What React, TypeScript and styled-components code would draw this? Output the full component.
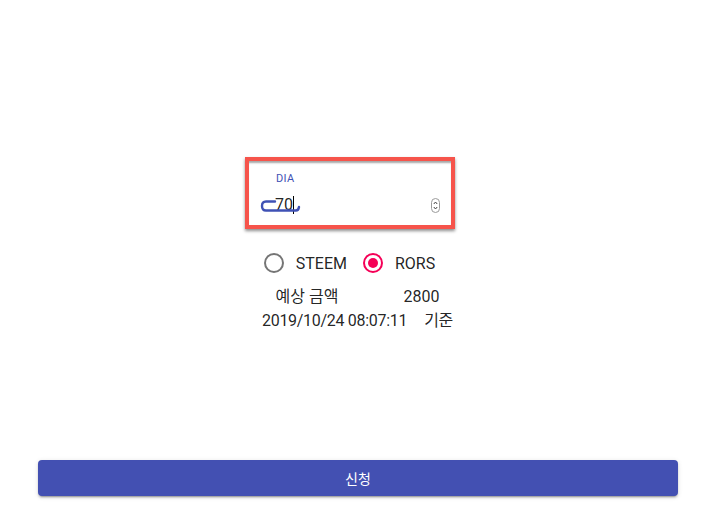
import React from "react";
import styled, { createGlobalStyle } from "styled-components";

const Global = createGlobalStyle`
  html, body { margin: 0; padding: 0; background: #fff; }
  body { font-family: Roboto, "Noto Sans CJK KR", "Liberation Sans", sans-serif; color: rgba(0,0,0,0.87); }
`;

const Page = styled.div`
  height: 519px;
  display: flex;
  flex-direction: column;
  align-items: center;
  box-sizing: border-box;
  padding-top: 157px;
`;

const FieldBox = styled.div`
  position: relative;
  width: 210px;
  height: 72px;
  box-sizing: border-box;
  border: 4px solid #f6544b;
  margin-right: 13px;
  background: #fff;
  box-shadow: 0 2px 3px rgba(0, 0, 0, 0.45), inset 0 3px 2px -1px rgba(0, 0, 0, 0.35);
  padding: 11px 0 0 27px;
`;

const Label = styled.div`
  font-size: 11px;
  line-height: 13px;
  color: #3f51b5;
  letter-spacing: 0.4px;
`;

const ValueRow = styled.div`
  margin-top: 10px;
  display: flex;
  align-items: center;
  height: 20px;
  font-size: 16px;
  line-height: 20px;
  color: rgba(0, 0, 0, 0.87);
  margin-left: -1px;
`;

const Caret = styled.span`
  display: inline-block;
  width: 1px;
  height: 18px;
  background: #000;
`;

const Squiggle = styled.svg`
  position: absolute;
  left: 10px;
  top: 39px;
`;

const Spinner = styled.svg`
  position: absolute;
  right: 11px;
  top: 37px;
`;

const RadioRow = styled.div`
  margin-top: 24px;
  display: flex;
  align-items: center;
  height: 20px;
  margin-right: 14px;
`;

const RadioItem = styled.label<{ $gap?: number }>`
  display: flex;
  align-items: center;
  font-size: 16px;
  margin-right: ${(p) => p.$gap ?? 0}px;
`;

const Circle = styled.span<{ $checked?: boolean }>`
  width: 20px;
  height: 20px;
  box-sizing: border-box;
  border-radius: 50%;
  border: 2px solid ${(p) => (p.$checked ? "#f50057" : "#757575")};
  display: flex;
  align-items: center;
  justify-content: center;
  margin-right: 12px;
  &::after {
    content: "";
    display: ${(p) => (p.$checked ? "block" : "none")};
    width: 10px;
    height: 10px;
    border-radius: 50%;
    background: #f50057;
  }
`;

const InfoLine = styled.div<{ $gap: number; $top: number; $spacing?: number }>`
  margin-top: ${(p) => p.$top}px;
  display: flex;
  gap: ${(p) => p.$gap}px;
  font-size: 16px;
  line-height: 24px;
  margin-left: 2px;
  letter-spacing: ${(p) => p.$spacing ?? 0}px;
`;

const Spacer = styled.div`
  flex: 1;
`;

const Button = styled.button`
  align-self: stretch;
  margin: 0 35px 23px 38px;
  height: 36px;
  border: none;
  border-radius: 4px;
  background: #4350b2;
  color: #fff;
  font-family: Roboto, "Noto Sans CJK KR", sans-serif;
  font-size: 14px;
  box-shadow: 0 3px 1px -2px rgba(0,0,0,0.2), 0 2px 2px 0 rgba(0,0,0,0.14), 0 1px 5px 0 rgba(0,0,0,0.12);
`;

export default function App() {
  return (
    <>
      <Global />
      <Page>
        <FieldBox>
          <Squiggle width="44" height="16" viewBox="0 0 44 16">
            <path
              d="M16 1.5 H7 Q3 1.5 3 6 Q3 10.5 7 10.5 H37 Q39.5 10.5 40 7"
              fill="none"
              stroke="#3f51b5"
              strokeWidth="2.4"
              strokeLinecap="round"
            />
          </Squiggle>
          <Label>DIA</Label>
          <ValueRow>
            70<Caret />
          </ValueRow>
          <Spinner width="9" height="15" viewBox="0 0 9 15">
            <rect x="0.5" y="0.5" width="8" height="14" rx="4" fill="#fff" stroke="#9a9a9a" />
            <path d="M2.8 6 L4.5 4 L6.2 6" fill="none" stroke="#444" strokeWidth="1" />
            <path d="M2.8 9 L4.5 11 L6.2 9" fill="none" stroke="#444" strokeWidth="1" />
          </Spinner>
        </FieldBox>
        <RadioRow>
          <RadioItem $gap={16}>
            <Circle />
            STEEM
          </RadioItem>
          <RadioItem>
            <Circle $checked />
            RORS
          </RadioItem>
        </RadioRow>
        <InfoLine $gap={65} $top={12}>
          <span>예상 금액</span>
          <span>2800</span>
        </InfoLine>
        <InfoLine $gap={17} $top={0} $spacing={-0.3}>
          <span>2019/10/24 08:07:11</span>
          <span>기준</span>
        </InfoLine>
        <Spacer />
        <Button>신청</Button>
      </Page>
    </>
  );
}
